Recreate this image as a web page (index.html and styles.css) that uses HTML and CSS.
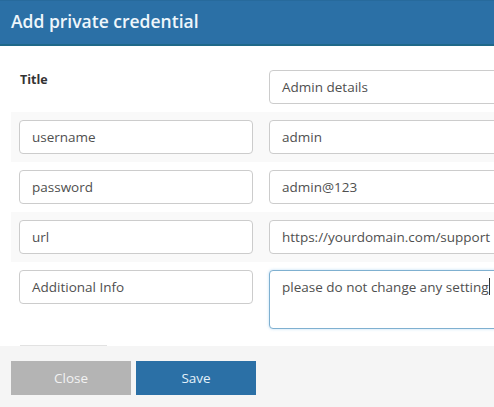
FILE: index.html
```html
<!DOCTYPE html>
<html>
<head>
<meta charset="utf-8">
<link rel="stylesheet" href="styles.css">
</head>
<body>
<div class="modal">
  <div class="modal-header">
    <h1 class="modal-title">Add private credential</h1>
  </div>
  <div class="modal-body">
    <div class="row">
      <div class="cell"><span class="label">Title</span></div>
      <div class="cell"><div class="field">Admin details</div></div>
    </div>
    <div class="row striped">
      <div class="cell"><div class="field">username</div></div>
      <div class="cell"><div class="field">admin</div></div>
    </div>
    <div class="row">
      <div class="cell"><div class="field">password</div></div>
      <div class="cell"><div class="field">admin@123</div></div>
    </div>
    <div class="row striped">
      <div class="cell"><div class="field">url</div></div>
      <div class="cell"><div class="field">https://yourdomain.com/support</div></div>
    </div>
    <div class="row row-tall">
      <div class="cell"><div class="field">Additional Info</div></div>
      <div class="cell"><div class="field area">please do not change any setting<span class="caret"></span></div></div>
    </div>
    <div class="hidden-edge"></div>
  </div>
  <div class="modal-footer">
    <button class="btn btn-close">Close</button>
    <button class="btn btn-save">Save</button>
  </div>
</div>
</body>
</html>
```

FILE: styles.css
```css
html, body {
  margin: 0;
  padding: 0;
  overflow: hidden;
  background: #ffffff;
}
body {
  font-family: "Open Sans", "Noto Sans", sans-serif;
  color: #505050;
  width: 494px;
  height: 407px;
}
.modal {
  width: 494px;
  overflow: hidden;
}
.modal-header {
  background: #2b70a6;
  border-top: 1px solid #276a9c;
  border-bottom: 2px solid #1f6889;
  box-sizing: border-box;
  height: 46px;
  display: flex;
  align-items: center;
  padding-left: 11px;
}
.modal-title {
  margin: 0;
  font-size: 17.5px;
  font-weight: 600;
  color: #eef6fb;
  line-height: 1;
  padding-bottom: 2px;
}
.modal-body {
  padding: 16px 0 0 11px;
}
.row {
  display: grid;
  grid-template-columns: 250px 340px;
  height: 50px;
}
.row.striped {
  background: #f9f9f9;
}
.row.row-tall {
  height: 83px;
}
.cell {
  padding: 8px;
  box-sizing: border-box;
  display: flex;
  align-items: flex-start;
}
.label {
  font-weight: 700;
  font-size: 12.5px;
  color: #333333;
  padding-left: 1px;
  line-height: 20px;
}
.field {
  width: 100%;
  height: 34px;
  box-sizing: border-box;
  border: 1px solid #cccccc;
  border-radius: 4px;
  background: #ffffff;
  padding: 0 12px;
  font-size: 13.5px;
  line-height: 32px;
  color: #4f4f4f;
  white-space: nowrap;
}
.field.area {
  height: 59px;
  border-color: #7fb0d0;
  box-shadow: 0 0 3px rgba(102, 175, 233, 0.45);
  line-height: 20px;
  padding-top: 6px;
}
.caret {
  display: inline-block;
  width: 1px;
  height: 17px;
  background: #333333;
  vertical-align: -3px;
}
.hidden-edge {
  margin-left: 9px;
  width: 87px;
  height: 1px;
  background: #e2e2e2;
}
.modal-footer {
  background: #f5f5f5;
  padding: 15px 11px 12px;
  display: flex;
  gap: 5px;
}
.btn {
  width: 120px;
  height: 34px;
  border: none;
  font-family: "Open Sans", "Noto Sans", sans-serif;
  font-size: 13.5px;
  padding: 0;
  cursor: pointer;
}
.btn-close {
  background: #b4b4b4;
  color: #f2f2f2;
}
.btn-save {
  background: #2b70a6;
  color: #e3f1fa;
}
```
